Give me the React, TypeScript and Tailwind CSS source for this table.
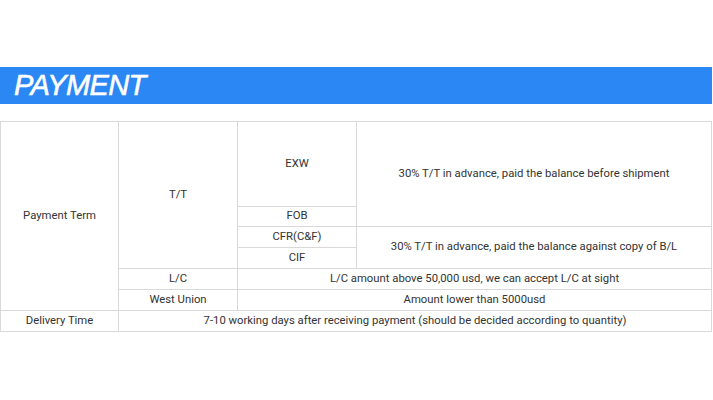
const cell = "border border-[#d9d9d9] text-center align-middle p-0";

export default function App() {
  return (
    <div className="w-[713px] h-[400px] bg-white pt-[67px] font-['Roboto',sans-serif] text-[11.3px] text-[#333]">
      <div className="h-[37px] w-[712px] bg-[#2b87f3] flex items-center pl-[14px]">
        <h1 className="font-['Liberation_Sans',Arial,sans-serif] italic text-[29px] leading-none text-white tracking-[-0.6px] [-webkit-text-stroke:0.6px_white]">
          PAYMENT
        </h1>
      </div>
      <div className="pt-[17px]">
        <table className="w-[712px] border-collapse table-fixed">
          <colgroup>
            <col className="w-[118px]" />
            <col className="w-[119px]" />
            <col className="w-[119px]" />
            <col />
          </colgroup>
          <tbody>
            <tr className="h-[85px]">
              <td rowSpan={6} className={cell}>Payment Term</td>
              <td rowSpan={4} className={cell}>T/T</td>
              <td className={cell}>EXW</td>
              <td rowSpan={2} className={cell}>30% T/T in advance, paid the balance before shipment</td>
            </tr>
            <tr className="h-[20px]">
              <td className={cell}>FOB</td>
            </tr>
            <tr className="h-[21px]">
              <td className={cell}>CFR(C&amp;F)</td>
              <td rowSpan={2} className={cell}>30% T/T in advance, paid the balance against copy of B/L</td>
            </tr>
            <tr className="h-[21px]">
              <td className={cell}>CIF</td>
            </tr>
            <tr className="h-[21px]">
              <td className={cell}>L/C</td>
              <td colSpan={2} className={cell}>L/C amount above 50,000 usd, we can accept L/C at sight</td>
            </tr>
            <tr className="h-[21px]">
              <td className={cell}>West Union</td>
              <td colSpan={2} className={cell}>Amount lower than 5000usd</td>
            </tr>
            <tr className="h-[21px]">
              <td className={cell}>Delivery Time</td>
              <td colSpan={3} className={cell}>7-10 working days after receiving payment (should be decided according to quantity)</td>
            </tr>
          </tbody>
        </table>
      </div>
    </div>
  );
}
